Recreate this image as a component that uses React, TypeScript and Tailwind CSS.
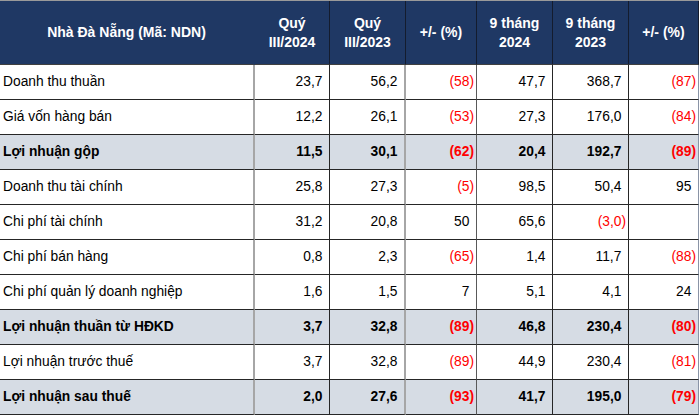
import React from "react";

type Row = { label: string; vals: string[]; bold?: boolean };

const rows: Row[] = [
  { label: "Doanh thu thuần", vals: ["23,7", "56,2", "(58)", "47,7", "368,7", "(87)"] },
  { label: "Giá vốn hàng bán", vals: ["12,2", "26,1", "(53)", "27,3", "176,0", "(84)"] },
  { label: "Lợi nhuận gộp", vals: ["11,5", "30,1", "(62)", "20,4", "192,7", "(89)"], bold: true },
  { label: "Doanh thu tài chính", vals: ["25,8", "27,3", "(5)", "98,5", "50,4", "95"] },
  { label: "Chi phí tài chính", vals: ["31,2", "20,8", "50", "65,6", "(3,0)", ""] },
  { label: "Chi phí bán hàng", vals: ["0,8", "2,3", "(65)", "1,4", "11,7", "(88)"] },
  { label: "Chi phí quản lý doanh nghiệp", vals: ["1,6", "1,5", "7", "5,1", "4,1", "24"] },
  { label: "Lợi nhuận thuần từ HĐKD", vals: ["3,7", "32,8", "(89)", "46,8", "230,4", "(80)"], bold: true },
  { label: "Lợi nhuận trước thuế", vals: ["3,7", "32,8", "(89)", "44,9", "230,4", "(81)"] },
  { label: "Lợi nhuận sau thuế", vals: ["2,0", "27,6", "(93)", "41,7", "195,0", "(79)"], bold: true },
];

const colBorders = [
  "border-r-2 border-r-[#a6a6a6]",
  "border-r border-r-[#262626]",
  "border-r-2 border-r-[#a6a6a6]",
  "border-r border-r-[#595959]",
  "border-r border-r-[#262626]",
  "border-r border-r-[#262626]",
  "border-r border-r-[#8a94a6]",
];

const headers = [
  ["Nhà Đà Nẵng (Mã: NDN)"],
  ["Quý", "III/2024"],
  ["Quý", "III/2023"],
  ["+/- (%)"],
  ["9 tháng", "2024"],
  ["9 tháng", "2023"],
  ["+/- (%)"],
];

export default function App() {
  return (
    <div
      className="w-[700px] h-[418px] bg-white overflow-hidden"
      style={{ fontFamily: '"Liberation Sans", Arial, sans-serif' }}
    >
      <div className="grid grid-cols-[255px_75px_76px_71px_76px_76px_70px] w-[699px] border-t border-t-[#9a9a9a]">
        {headers.map((h, i) => (
          <div
            key={"h" + i}
            className={`h-[64px] bg-[#1f3864] text-white font-bold text-[14px] leading-[19px] flex flex-col items-center justify-center text-center border-b border-b-[#404040] ${
              i === 0 ? "border-r-2 border-r-[#1f3864]" : "border-r border-r-[#141c2e]"
            } ${i === 6 ? "border-r-[#8a94a6]" : ""}`}
          >
            {h.map((l, j) => (
              <div key={j}>{l}</div>
            ))}
          </div>
        ))}
        {rows.map((r, ri) => (
          <React.Fragment key={ri}>
            <div
              className={`h-[35px] flex items-center pl-[3px] text-[13.8px] text-black border-b border-b-[#262626] ${colBorders[0]} ${
                r.bold ? "font-bold bg-[#d6dce4]" : "bg-white"
              }`}
            >
              {r.label}
            </div>
            {r.vals.map((v, vi) => {
              const neg = v.startsWith("(");
              return (
                <div
                  key={vi}
                  className={`h-[35px] flex items-center justify-end pr-[2px] text-[13.8px] border-b border-b-[#262626] ${colBorders[vi + 1]} ${
                    r.bold ? "font-bold bg-[#d6dce4]" : "bg-white"
                  } ${neg ? "text-[#ff0000]" : "text-black"}`}
                >
                  {v}
                  {!neg && v !== "" && <span className="invisible">)</span>}
                </div>
              );
            })}
          </React.Fragment>
        ))}
      </div>
    </div>
  );
}
